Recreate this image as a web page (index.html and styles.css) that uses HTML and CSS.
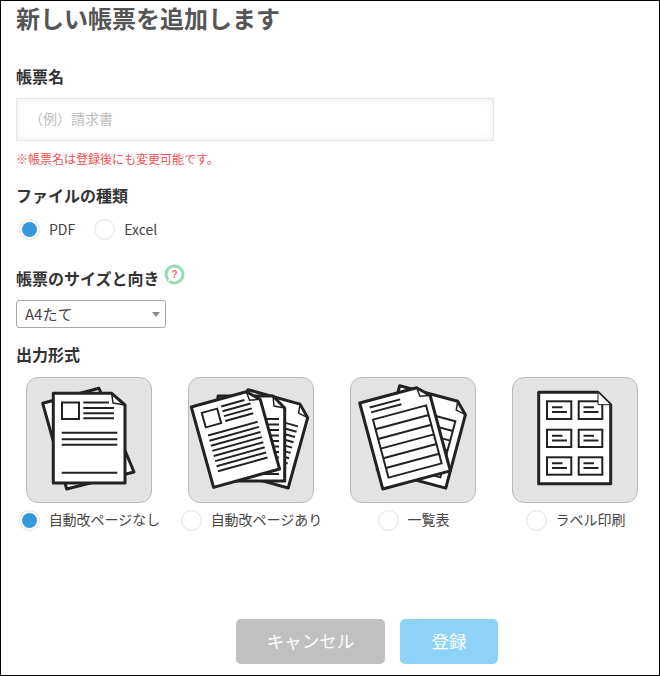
FILE: index.html
```html
<!DOCTYPE html>
<html lang="ja">
<head>
<meta charset="utf-8">
<title>新しい帳票を追加します</title>
<link rel="stylesheet" href="styles.css">
</head>
<body>
<main class="window">
  <h1 class="title">新しい帳票を追加します</h1>

  <h2 class="label label-name">帳票名</h2>
  <input class="text-input" type="text" placeholder="（例）請求書">
  <p class="note">※帳票名は登録後にも変更可能です。</p>

  <h2 class="label label-type">ファイルの種類</h2>
  <div class="type-row">
    <label class="radio-item"><input class="radio" type="radio" name="type" checked><span>PDF</span></label>
    <label class="radio-item"><input class="radio" type="radio" name="type"><span>Excel</span></label>
  </div>

  <h2 class="label label-size">帳票のサイズと向き
    <svg class="help" width="21" height="21" viewBox="0 0 21 21">
      <circle cx="10.500" cy="10.500" r="10" fill="#97dcb1"/>
      <path d="M10.500 3.600a6.900 6.900 0 1 1-3.500 12.800l-3 1.100 .9-3.200a6.900 6.900 0 0 1 5.600-10.700z" fill="#fff"/>
      <text x="10.500" y="14" text-anchor="middle" class="help-mark">?</text>
    </svg>
  </h2>
  <div class="select-wrap">
    <select class="select"><option>A4たて</option></select>
  </div>

  <h2 class="label label-format">出力形式</h2>
  <div class="formats">
    <div class="format">
      <div class="tile">
        <svg class="art" viewBox="0 0 126 126">
          <g class="sheet">
            <polygon points="16.700,26.300 73,11.300 108,95 40.700,112"/>
            <path d="M27.300 16.300H85.700L99 28V106H27.300Z"/>
            <path class="fold" d="M85.700 16.300L87 26L99 28"/>
          </g>
          <g class="ink">
            <rect x="36" y="25.500" width="17" height="16.500"/>
            <path d="M57.300 25.500H83M57.300 31H88M57.300 36.300H88M57.300 41.300H88M35.700 55.700H91.300M35.700 62.300H91.300M35.700 67.700H91.300M35.700 95.700H91.300"/>
          </g>
        </svg>
      </div>
      <label class="radio-item"><input class="radio" type="radio" name="format" checked><span>自動改ページなし</span></label>
    </div>

    <div class="format">
      <div class="tile">
        <svg class="art" viewBox="0 0 126 126">
          <g transform="translate(60 12.700) rotate(15.500)">
            <path class="sheet" d="M0 0H54L65 11V84H0Z"/>
            <path class="fold" d="M54 0L55 9L65 11"/>
            <path class="ink" d="M28 22H58M28 27.500H58M28 33H58M28 38.500H58M28 44H58M28 49.500H58M28 55H58M28 60.500H58M28 66H58M28 71.500H58"/>
          </g>
          <g>
            <path class="sheet" d="M30 19H85L96.700 31V104H30Z"/>
            <path class="fold" d="M85 19L86 29L96.700 31"/>
            <path class="ink" d="M50 42H91M50 47.500H91M50 53H91M50 58.500H91M50 64H91M50 69.500H91M50 75H91M50 80.500H91M50 86H91M50 91.500H91M50 97H91"/>
          </g>
          <g transform="translate(3.300 30) rotate(-15.500)">
            <path class="sheet" d="M0 0H57L68.500 11V83.400H0Z"/>
            <path class="fold" d="M57 0L58 9L68.500 11"/>
            <rect class="ink" x="8.500" y="8.500" width="16" height="15"/>
            <path class="ink" d="M29 7.500H53M29 12.500H58M29 17.500H58M29 22.500H58M8.500 32H60M8.500 37.300H60M8.500 42.600H60M8.500 47.900H60M8.500 53.200H60M8.500 58.500H60M8.500 63.800H60M8.500 69.100H60"/>
          </g>
        </svg>
      </div>
      <label class="radio-item"><input class="radio" type="radio" name="format"><span>自動改ページあり</span></label>
    </div>

    <div class="format">
      <div class="tile">
        <svg class="art" viewBox="0 0 126 126">
          <g transform="translate(49.700 8.700) rotate(15)">
            <path class="sheet" d="M0 0H60L71 11V87H0Z"/>
            <path class="fold" d="M60 0L61 9L71 11"/>
            <path class="ink" d="M8.500 20H63V78H8.500ZM8.500 30H63M8.500 40H63M8.500 50H63M8.500 60H63M8.500 70H63"/>
          </g>
          <g transform="translate(9.700 26) rotate(-15)">
            <path class="sheet" d="M0 0H59L70 11V89H0Z"/>
            <path class="fold" d="M59 0L60 9L70 11"/>
            <path class="ink" d="M8.500 7H40M8.500 12H40M8.500 19.500H63.500V79.500H8.500ZM8.500 29.500H63.500M8.500 39.500H63.500M8.500 49.500H63.500M8.500 59.500H63.500M8.500 69.500H63.500"/>
          </g>
        </svg>
      </div>
      <label class="radio-item"><input class="radio" type="radio" name="format"><span>一覧表</span></label>
    </div>

    <div class="format">
      <div class="tile">
        <svg class="art" viewBox="0 0 126 126">
          <path class="sheet" d="M26.700 15.300H86L98.700 27.700V106.700H26.700Z"/>
          <g class="ink">
            <rect x="35" y="24.300" width="24.300" height="17.700"/>
            <rect x="66.700" y="24.300" width="23.600" height="17.700"/>
            <rect x="35" y="52.700" width="24.300" height="17.300"/>
            <rect x="66.700" y="52.700" width="23.600" height="17.300"/>
            <rect x="35" y="80.300" width="24.300" height="17.400"/>
            <rect x="66.700" y="80.300" width="23.600" height="17.400"/>
            <path d="M40 30.300H50.500M40 35H55M71.500 30.300H82M71.500 35H86.500M40 58.700H50.500M40 63.400H55M71.500 58.700H82M71.500 63.400H86.500M40 86.300H50.500M40 91H55M71.500 86.300H82M71.500 91H86.500"/>
          </g>
          <path class="corner" d="M86 15.300L98.700 27.700H86Z"/>
        </svg>
      </div>
      <label class="radio-item"><input class="radio" type="radio" name="format"><span>ラベル印刷</span></label>
    </div>
  </div>

  <div class="actions">
    <button class="btn btn-cancel" type="button">キャンセル</button>
    <button class="btn btn-submit" type="button">登録</button>
  </div>
</main>
</body>
</html>
```
FILE: styles.css
```css
* {
  box-sizing: border-box;
}

html,
body {
  margin: 0;
  padding: 0;
  background: #fff;
}

body {
  font-family: "Noto Sans CJK JP", "Noto Sans", sans-serif;
  color: #444;
}

.window {
  width: 660px;
  height: 676px;
  padding: 0 15px;
  border: 1px solid #000;
  overflow: hidden;
}

.title {
  height: 36px;
  margin: 0;
  font-size: 24px;
  line-height: 34px;
  font-weight: 700;
  color: #555;
}

.label {
  display: flex;
  align-items: flex-start;
  margin: 0;
  height: 24px;
  font-size: 16px;
  line-height: 22px;
  font-weight: 700;
  color: #333;
}

.label-name {
  margin-top: 28px;
}

.label-type {
  margin-top: 16px;
}

.label-size {
  margin-top: 27px;
}

.label-format {
  margin-top: 15px;
}

.help {
  margin: -3px 0 0 4px;
}

.help-mark {
  font-family: "Liberation Sans", sans-serif;
  font-size: 10px;
  font-weight: 700;
  fill: #f06a6a;
}

.text-input {
  display: block;
  width: 478px;
  height: 43px;
  margin-top: 9px;
  padding: 0 12px 3px;
  border: 1px solid #e6e6e6;
  outline: 0;
  box-shadow: inset 0 0 8px rgba(0, 0, 0, 0.07);
  font: 14px "Noto Sans CJK JP", sans-serif;
  color: #444;
  background: #fff;
}

.text-input::placeholder {
  color: #bbb;
}

.note {
  margin: 9px 0 0;
  font-size: 12px;
  line-height: 18px;
  color: #f04f4f;
}

.type-row {
  display: flex;
  gap: 19px;
  margin: 10px 0 0 3px;
}

.radio-item {
  display: inline-flex;
  align-items: center;
  gap: 9px;
  height: 22px;
  font-size: 14px;
  line-height: 21px;
  color: #444;
}

.format .radio-item {
  margin-left: 1px;
}

.format .radio-item span {
  margin-bottom: 2px;
}

.radio {
  width: 21px;
  height: 21px;
  margin: 0;
  padding: 2px;
  flex: none;
  appearance: none;
  border: 1px solid #e4e4e4;
  border-radius: 50%;
  background: #fff;
  background-clip: content-box;
  box-shadow: inset 0 0 2px rgba(0, 0, 0, 0.08);
}

.radio:checked {
  background-color: #3498db;
}

.select-wrap {
  position: relative;
  width: 150px;
  height: 28px;
  margin-top: 9px;
}

.select-wrap::after {
  content: "";
  position: absolute;
  top: 12px;
  right: 6px;
  border-top: 5px solid #888;
  border-left: 4px solid transparent;
  border-right: 4px solid transparent;
  pointer-events: none;
}

.select {
  display: block;
  width: 100%;
  height: 100%;
  padding: 0 0 2px 8px;
  appearance: none;
  border: 1px solid #a8a8a8;
  border-radius: 3px;
  background: #fff;
  font: 15px "Noto Sans CJK JP", sans-serif;
  color: #444;
}

.formats {
  display: grid;
  grid-template-columns: repeat(4, 162px);
  margin: 10px 0 0 -8px;
}

.format {
  display: flex;
  flex-direction: column;
  align-items: center;
  gap: 6px;
}

.tile {
  width: 126px;
  height: 126px;
  border: 1px solid #bbb;
  border-radius: 12px;
  background: #e3e3e3;
  overflow: hidden;
}

.art {
  display: block;
  width: 126px;
  height: 126px;
  margin: -1px;
}

.sheet,
.sheet polygon,
.sheet path {
  fill: #fff;
  stroke: #222;
  stroke-width: 3;
  stroke-linejoin: round;
}

.sheet .fold,
.fold {
  fill: none;
  stroke: #222;
  stroke-width: 1.500;
}

.ink,
.ink rect,
.ink path {
  fill: none;
  stroke: #222;
  stroke-width: 2;
}

.corner {
  fill: #fff;
  stroke: #222;
  stroke-width: 1;
}

.actions {
  display: flex;
  gap: 15px;
  margin-top: 88px;
  padding-left: 220px;
}

.btn {
  height: 45px;
  padding: 0 0 2px;
  border: 0;
  border-radius: 5px;
  font: 17.500px "Noto Sans CJK JP", sans-serif;
  color: #fff;
}

.btn-cancel {
  width: 149px;
  background: #c0c0c0;
}

.btn-submit {
  width: 98px;
  background: #8cd3f7;
}
```
